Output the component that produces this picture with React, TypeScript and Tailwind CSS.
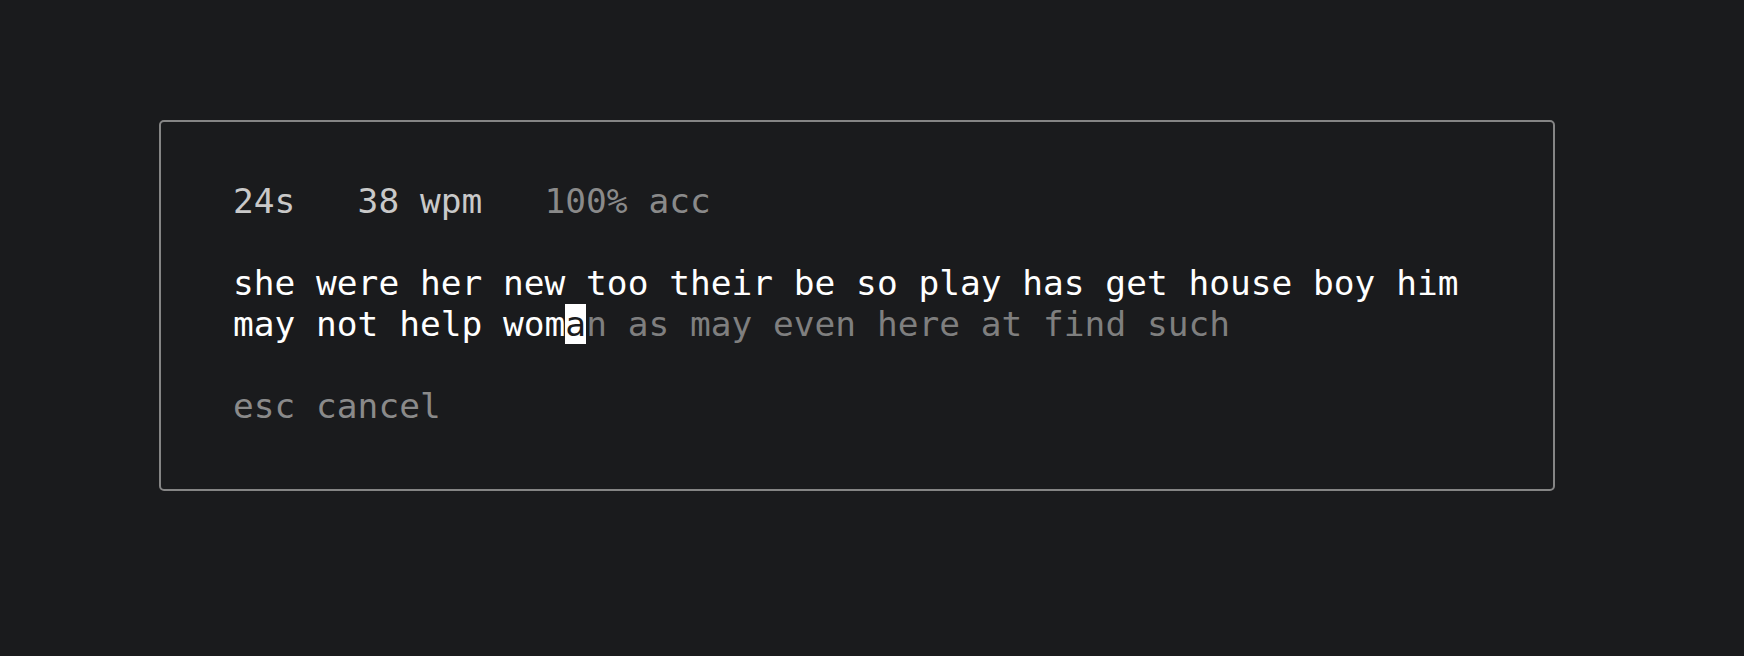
const typed = "she were her new too their be so play has get house boy him\nmay not help wom";
const cursorChar = "a";
const rest = "n as may even here at find such";

export default function App() {
  return (
    <div className="h-[656px] w-full bg-[#1a1b1d] pt-[120px] pl-[159px] font-['DejaVu_Sans_Mono',monospace] text-[34.5px] leading-[41px]">
      <div className="w-[1396px] h-[371px] rounded-[5px] border-2 border-[#858585] bg-[#1a1b1d] pl-[72px] pt-[59px]">
        {/* stats line */}
        <div className="whitespace-pre">
          <span className="text-[#c9c9c9]">24s   38 wpm   </span>
          <span className="text-[#8a8a8a]">100% acc</span>
        </div>
        <div className="h-[41px]" />
        {/* prompt text */}
        <div className="whitespace-pre text-white">
          {typed}
          <span className="bg-white text-[#1a1b1d]">{cursorChar}</span>
          <span className="text-[#7f7f7f]">{rest}</span>
        </div>
        <div className="h-[41px]" />
        <div className="text-[#8a8a8a]">esc cancel</div>
      </div>
    </div>
  );
}
